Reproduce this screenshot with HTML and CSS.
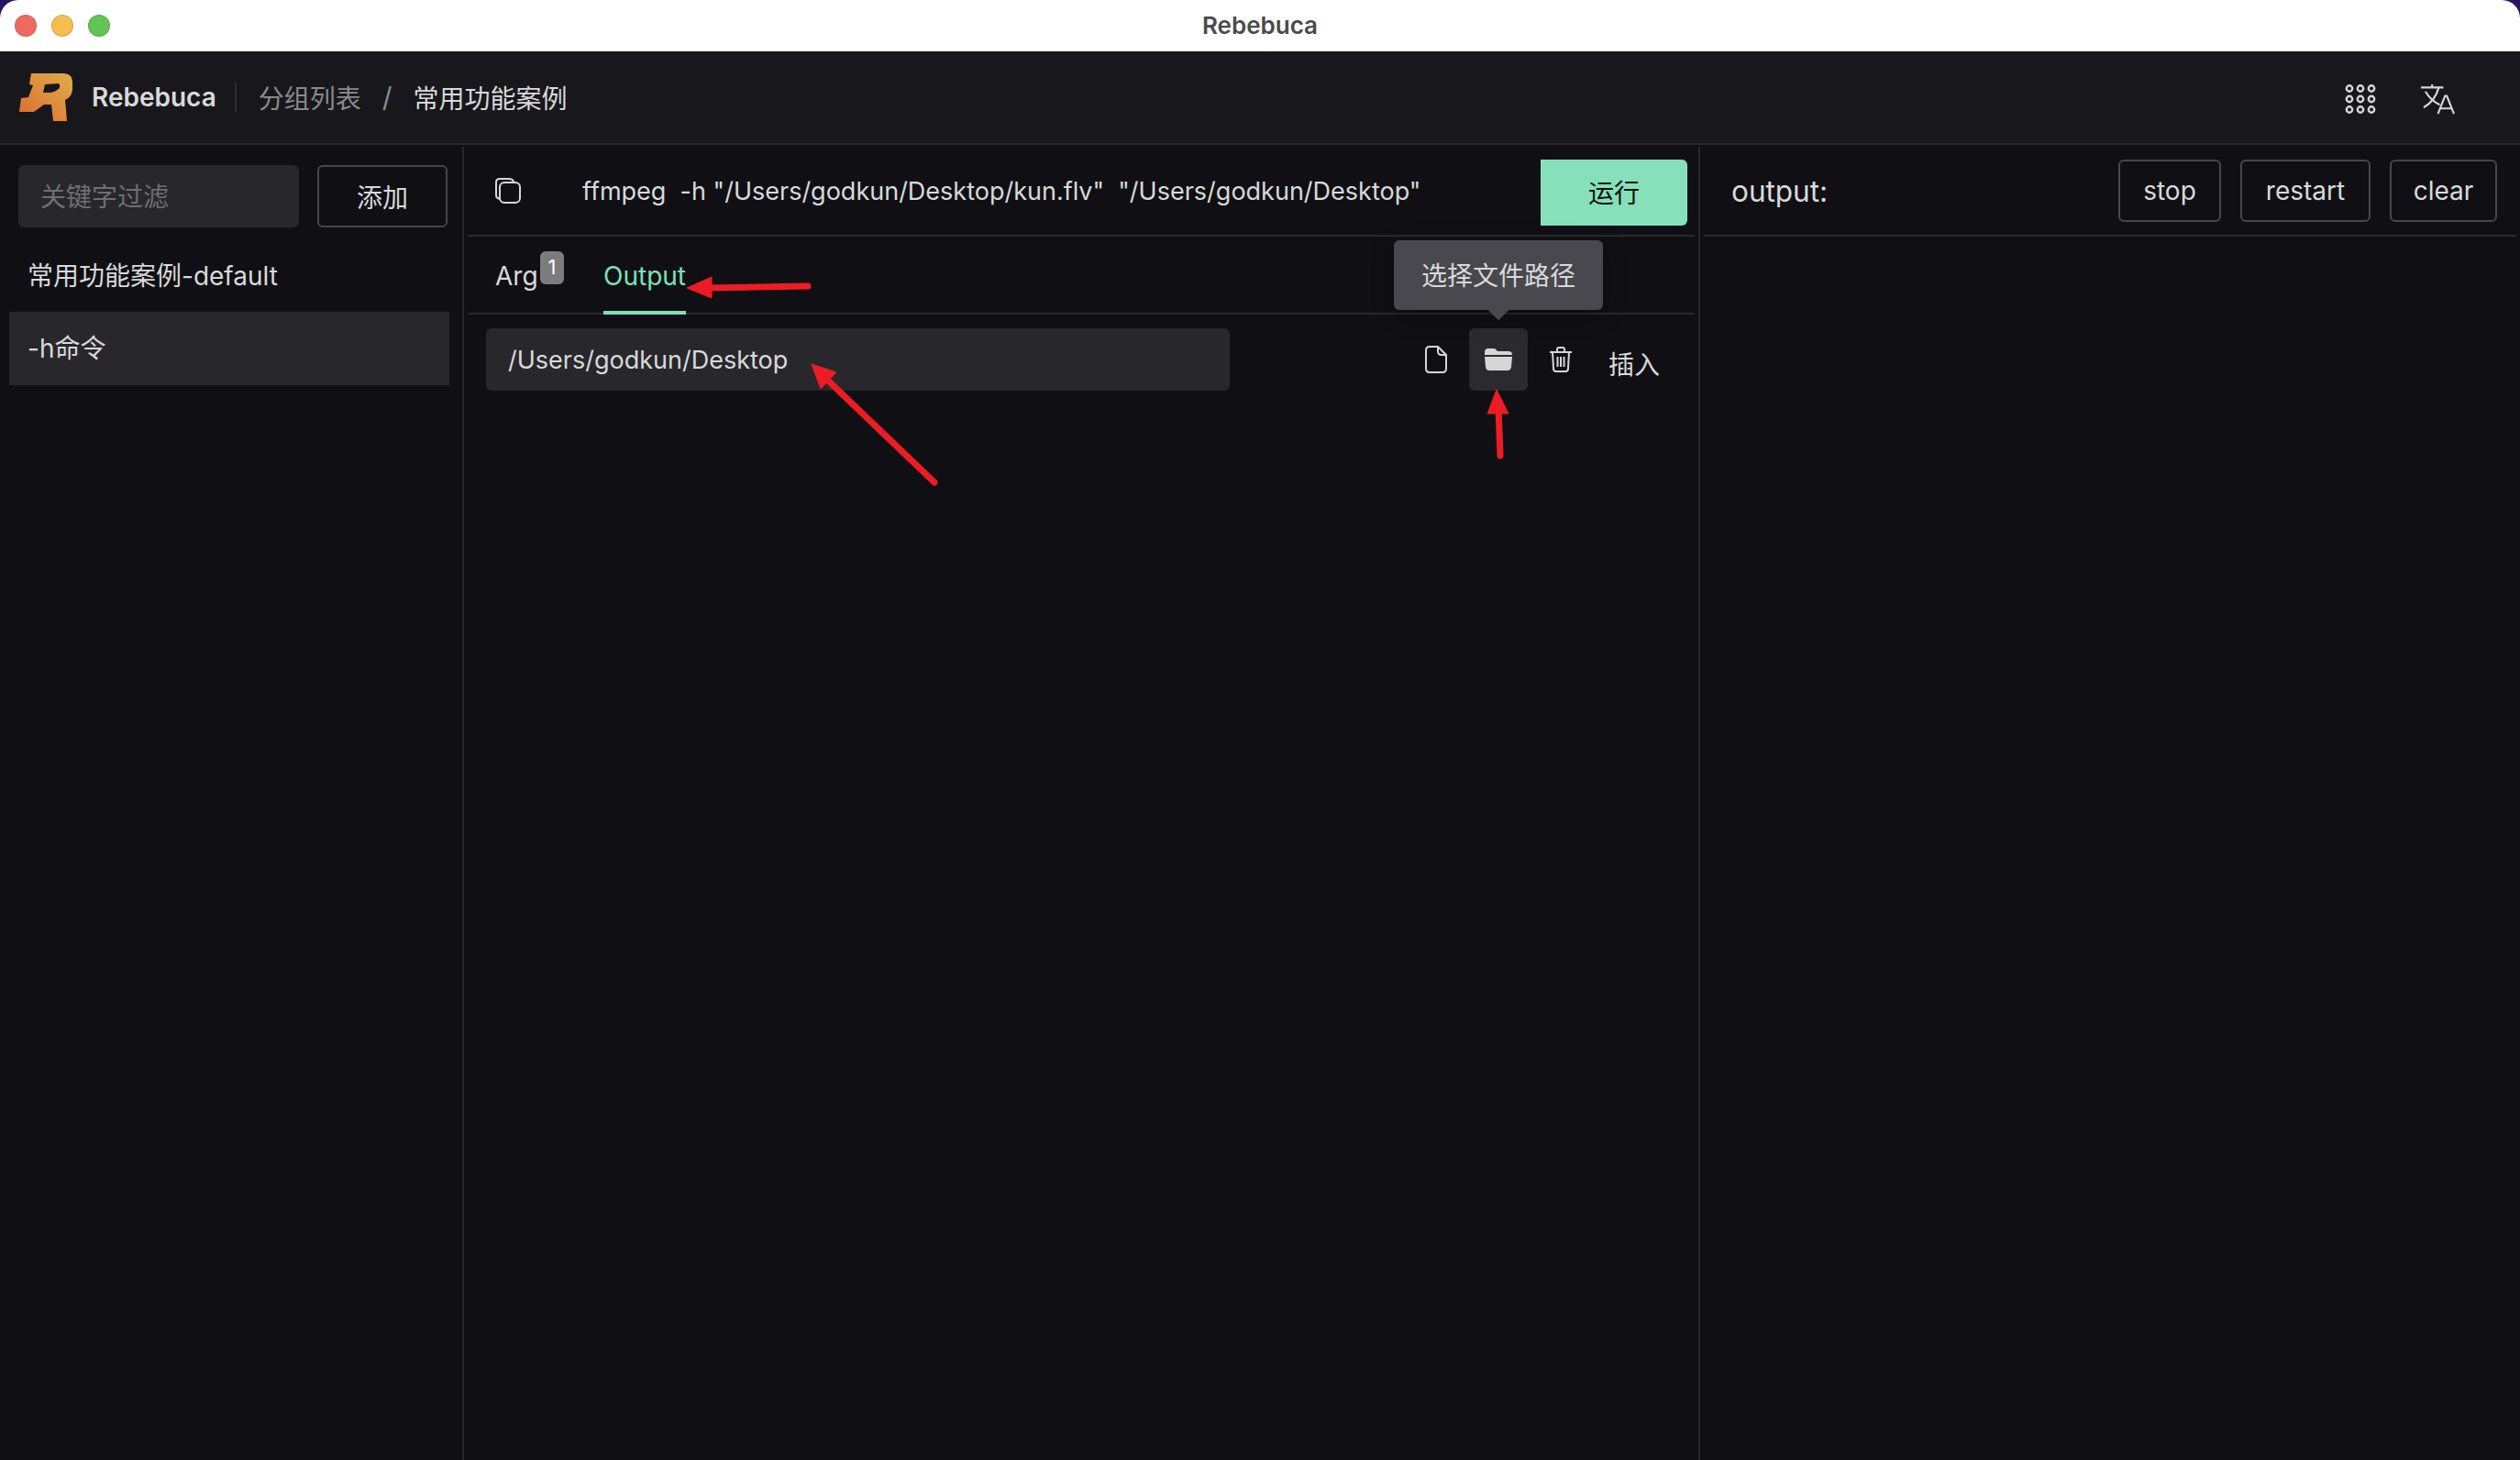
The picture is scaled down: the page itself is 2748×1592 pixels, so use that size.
FILE: index.html
```html
<!DOCTYPE html>
<html lang="en">
<head>
    <meta charset="UTF-8">
    <meta name="viewport" content="width=device-width, initial-scale=1.0">
    <title>Rebebuca</title>
    <link rel="stylesheet" href="styles.css">
</head>
<body>
    <div class="window">
        <div class="titlebar">
            <div class="lights">
                <span class="light red"></span>
                <span class="light yellow"></span>
                <span class="light green"></span>
            </div>
            <div class="title">Rebebuca</div>
        </div>

        <header class="topbar">
            <svg class="logo" viewBox="0 0 60 54">
                <defs>
                    <linearGradient id="logoFill" x1="0" y1="1" x2="1" y2="0">
                        <stop offset="0" stop-color="#dd6a33"/>
                        <stop offset="1" stop-color="#dfae48"/>
                    </linearGradient>
                </defs>
                <path fill="url(#logoFill)" fill-rule="evenodd" d="M14 1 L50 1 Q59 2 59 10 L59 19 Q58 27 51 30 L53 53 L38 53 L36 35 L28 35 L17 43 L1 43 L3 28 L11 27 L16 14 L12 13 Z M29 13 L44 12 Q46 14 45 17 Q40 22 33 22 L27 22 Z"/>
            </svg>
            <span class="brand">Rebebuca</span>
            <span class="brand-sep"></span>
            <span class="crumb muted">分组列表</span>
            <span class="crumb-slash">/</span>
            <span class="crumb">常用功能案例</span>
            <div class="topbar-icons">
                <svg class="icon-grid" viewBox="0 0 34 32" fill="none" stroke="#d6d6d6" stroke-width="2.4">
                    <circle cx="5" cy="4.500" r="3.200"/><circle cx="17" cy="4.500" r="3.200"/><circle cx="29" cy="4.500" r="3.200"/>
                    <circle cx="5" cy="16" r="3.200"/><circle cx="17" cy="16" r="3.200"/><circle cx="29" cy="16" r="3.200"/>
                    <circle cx="5" cy="27.500" r="3.200"/><circle cx="17" cy="27.500" r="3.200"/><circle cx="29" cy="27.500" r="3.200"/>
                </svg>
                <svg class="icon-lang" viewBox="0 0 38 34" fill="none" stroke="#d6d6d6" stroke-width="2.2">
                    <path d="M0 3.500 H25 M12.500 0 V3.500 M20 3.500 C17 14 10 22 3 26 M5 8 C9 15 15 20 21 23"/>
                    <path d="M19 33 L27 13 L29 13 L37 33 M22 27 H34"/>
                </svg>
            </div>
        </header>

        <div class="main">
            <aside class="sidebar">
                <div class="search-row">
                    <input class="search" type="text" placeholder="关键字过滤">
                    <button class="btn add-btn">添加</button>
                </div>
                <div class="group-item">常用功能案例-default</div>
                <div class="group-item active">-h命令</div>
            </aside>

            <section class="center">
                <div class="cmd-row">
                    <svg class="icon-copy" viewBox="0 0 28 28" fill="none" stroke="#d6d6d6" stroke-width="2">
                        <path d="M5 23 Q1 22 1 19 V5 Q1 1 5 1 H15 Q19 1 20 4"/>
                        <rect x="5" y="5" width="22" height="22" rx="5"/>
                    </svg>
                    <div class="cmd-text">ffmpeg&nbsp; -h "/Users/godkun/Desktop/kun.flv"&nbsp; "/Users/godkun/Desktop"</div>
                    <button class="run-btn">运行</button>
                </div>

                <div class="tabs">
                    <div class="tab arg-tab">Arg<span class="badge">1</span></div>
                    <div class="tab current">Output</div>
                </div>

                <div class="arg-row">
                    <input class="arg-input" type="text" value="/Users/godkun/Desktop">
                    <div class="arg-actions">
                        <div class="icon-btn">
                            <svg class="icon-file" viewBox="0 0 24 30" fill="none" stroke="#d6d6d6" stroke-width="2">
                                <path d="M14 1 H5 Q1 1 1 5 V25 Q1 29 5 29 H19 Q23 29 23 25 V10 Z"/>
                                <path d="M14 1 V6 Q14 10 18 10 H23"/>
                            </svg>
                        </div>
                        <div class="icon-btn hovered">
                            <svg class="icon-folder" viewBox="0 0 30 24">
                                <path fill="#d6d6d6" d="M0 4 Q0 0 4 0 H10 Q12 0 13 2 L14 3 H26 Q30 3 30 7 H0 Z"/>
                                <path fill="#d6d6d6" d="M0 9 H30 L29 20 Q28.500 24 25 24 H5 Q1.500 24 1 20 Z"/>
                            </svg>
                            <div class="tooltip">选择文件路径</div>
                        </div>
                        <div class="icon-btn">
                            <svg class="icon-trash" viewBox="0 0 24 28" fill="none" stroke="#d6d6d6" stroke-width="2">
                                <path d="M0 6 H24 M8 5 V3 Q8 1 10 1 H14 Q16 1 16 3 V5"/>
                                <path d="M3 6 L4 24 Q4 27 7 27 H17 Q20 27 20 24 L21 6"/>
                                <path d="M8.500 11 V22 M12 11 V22 M15.500 11 V22"/>
                            </svg>
                        </div>
                        <span class="insert">插入</span>
                    </div>
                </div>
            </section>

            <section class="output">
                <div class="output-head">
                    <span class="output-label">output:</span>
                    <div class="output-btns">
                        <button class="btn out-btn stop">stop</button>
                        <button class="btn out-btn restart">restart</button>
                        <button class="btn out-btn clear">clear</button>
                    </div>
                </div>
            </section>
        </div>

        <!-- red annotation arrows drawn over the screenshot -->
        <svg class="arrows" viewBox="0 0 2748 1592">
            <g fill="#ed1c24" stroke="#ed1c24">
                <path d="M881 312 L770 314" stroke-width="7" stroke-linecap="round"/>
                <path d="M749 314 L776 302 L776 325 Z" stroke-width="1"/>
                <path d="M1019 526 L903 415" stroke-width="7" stroke-linecap="round"/>
                <path d="M885 397 L912 406 L895 424 Z" stroke-width="1"/>
                <path d="M1636 497 L1634 445" stroke-width="7" stroke-linecap="round"/>
                <path d="M1632 425 L1645 451 L1622 451 Z" stroke-width="1"/>
            </g>
        </svg>
    </div>
</body>
</html>
```
FILE: styles.css
```css
* {
    box-sizing: border-box;
}
html, body {
    margin: 0;
    height: 100%;
    overflow: hidden;
}
body {
    background-color: #2b1466;
    font-family: Inter, "Noto Sans CJK SC", sans-serif;
    font-size: 28px;
    color: #d9d9da;
}
input, button {
    font-family: inherit;
    font-size: 28px;
}
.window {
    position: relative;
    height: 1592px;
    display: flex;
    flex-direction: column;
    background-color: #101014;
    border-radius: 20px 20px 0 0;
    overflow: hidden;
}

/* mac title bar */
.titlebar {
    position: relative;
    height: 56px;
    flex: none;
    display: flex;
    align-items: center;
    justify-content: center;
    padding-bottom: 2px;
    background-color: #fff;
}
.lights {
    position: absolute;
    left: 16px;
    top: 16px;
    display: flex;
    gap: 16px;
}
.light {
    width: 24px;
    height: 24px;
    border-radius: 50%;
    border: 1px solid rgba(0, 0, 0, 0.12);
}
.red { background-color: #ee6a5f; }
.yellow { background-color: #f5bd4f; }
.green { background-color: #61c454; }
.title {
    font-size: 26px;
    font-weight: 600;
    color: #4a4a4a;
}

/* top bar */
.topbar {
    height: 102px;
    flex: none;
    display: flex;
    align-items: center;
    padding: 0 71px 0 20px;
    background-color: #18181c;
    border-bottom: 2px solid #2a2a2e;
}
.logo {
    width: 60px;
    height: 54px;
}
.brand {
    margin-left: 20px;
    font-weight: 600;
    color: #d9d9da;
}
.brand-sep {
    width: 2px;
    height: 32px;
    margin: 0 24px 0 20px;
    background-color: #2f2f33;
}
.crumb {
    color: #d9d9da;
}
.crumb.muted {
    color: #8a8a8c;
}
.crumb-slash {
    margin: 0 23px;
    font-size: 30px;
    color: #8a8a8c;
}
.topbar-icons {
    margin-left: auto;
    margin-top: 4px;
    display: flex;
    align-items: center;
    gap: 49px;
}
.icon-grid {
    width: 34px;
    height: 32px;
}
.icon-lang {
    width: 37px;
    height: 33px;
}

.main {
    flex: 1;
    display: flex;
    padding-top: 2px;
    min-height: 0;
}

/* left column */
.sidebar {
    width: 506px;
    flex: none;
    padding: 20px 14px 0 10px;
    border-right: 2px solid #27272b;
}
.search-row {
    display: flex;
    gap: 20px;
    padding-left: 10px;
    margin-bottom: 12px;
}
.search {
    width: 306px;
    height: 68px;
    padding: 2px 24px 0;
    border: none;
    border-radius: 6px;
    background-color: #28282c;
    color: #d9d9da;
}
.search::placeholder {
    color: #6f6f72;
}
.btn {
    height: 68px;
    background: none;
    border: 2px solid #47474b;
    border-radius: 6px;
    color: #d9d9da;
}
.add-btn {
    width: 142px;
}
.group-item {
    height: 80px;
    padding: 0 20px 2px;
    display: flex;
    align-items: center;
}
.group-item.active {
    width: 480px;
    background-color: #28282c;
    padding-bottom: 4px;
}

/* middle column */
.center {
    width: 1348px;
    flex: none;
    border-right: 2px solid #27272b;
}
.cmd-row {
    height: 98px;
    margin: 0 5px 0 4px;
    padding: 14px 7px 0 30px;
    display: flex;
    align-items: flex-start;
    border-bottom: 2px solid #2a2a2e;
}
.icon-copy {
    width: 28px;
    height: 28px;
    flex: none;
    margin-top: 20px;
}
.cmd-text {
    margin-left: 67px;
    margin-top: 18px;
    flex: 1;
    font-size: 27px;
    white-space: nowrap;
}
.run-btn {
    width: 160px;
    height: 72px;
    padding-bottom: 3px;
    border: none;
    border-radius: 0 6px 6px 0;
    background-color: #86e0b9;
    color: #111;
}
.tabs {
    height: 85px;
    margin: 0 5px 0 4px;
    padding-left: 30px;
    display: flex;
    border-bottom: 2px solid #2a2a2e;
}
.tab {
    position: relative;
    height: 85px;
    padding-top: 26px;
    margin-bottom: -2px;
    white-space: nowrap;
}
.arg-tab {
    width: 118px;
}
.tab.current {
    color: #7fe0b6;
    border-bottom: 4px solid #7fe0b6;
    width: 90px;
}
.badge {
    position: absolute;
    left: 49px;
    top: 16px;
    width: 26px;
    height: 36px;
    text-align: center;
    line-height: 34px;
    font-size: 22px;
    border-radius: 6px;
    background-color: #7c7c7e;
    color: #fff;
}
.arg-row {
    margin-top: 15px;
    padding: 0 42px 0 24px;
    display: flex;
    justify-content: space-between;
}
.arg-input {
    width: 811px;
    height: 68px;
    padding: 0 24px;
    border: none;
    border-radius: 6px;
    background-color: #28282c;
    color: #d9d9da;
    font-size: 27px;
}
.arg-actions {
    display: flex;
    gap: 4px;
}
.icon-btn {
    position: relative;
    width: 64px;
    height: 68px;
    display: flex;
    align-items: center;
    justify-content: center;
    border-radius: 6px;
}
.icon-btn.hovered {
    background-color: #2b2b2f;
}
.icon-file {
    width: 24px;
    height: 30px;
}
.icon-folder {
    width: 30px;
    height: 24px;
}
.icon-trash {
    width: 24px;
    height: 28px;
}
.insert {
    margin-left: 16px;
    padding-top: 18px;
    white-space: nowrap;
}
.tooltip {
    position: absolute;
    bottom: calc(100% + 20px);
    left: 50%;
    transform: translateX(-50%);
    width: 228px;
    height: 76px;
    padding-bottom: 2px;
    display: flex;
    align-items: center;
    justify-content: center;
    background-color: #48484e;
    border-radius: 6px;
    white-space: nowrap;
    box-shadow: 0 6px 24px rgba(0, 0, 0, 0.3);
}
.tooltip::after {
    content: "";
    position: absolute;
    left: 50%;
    bottom: -8px;
    width: 16px;
    height: 16px;
    margin-left: -8px;
    background-color: #48484e;
    transform: rotate(45deg);
}

/* right column */
.output {
    flex: 1;
    min-width: 0;
}
.output-head {
    height: 98px;
    margin: 0 4px 0 4px;
    padding: 14px 21px 0 30px;
    display: flex;
    align-items: flex-start;
    justify-content: space-between;
    border-bottom: 2px solid #2a2a2e;
}
.output-label {
    margin-top: 15px;
    font-size: 31.500px;
}
.output-btns {
    display: flex;
    gap: 21px;
}
.out-btn {
    height: 68px;
    padding: 0;
}
.stop { width: 112px; }
.restart { width: 142px; }
.clear { width: 117px; }

.arrows {
    position: absolute;
    left: 0;
    top: 0;
    width: 2748px;
    height: 1592px;
    pointer-events: none;
}
```
